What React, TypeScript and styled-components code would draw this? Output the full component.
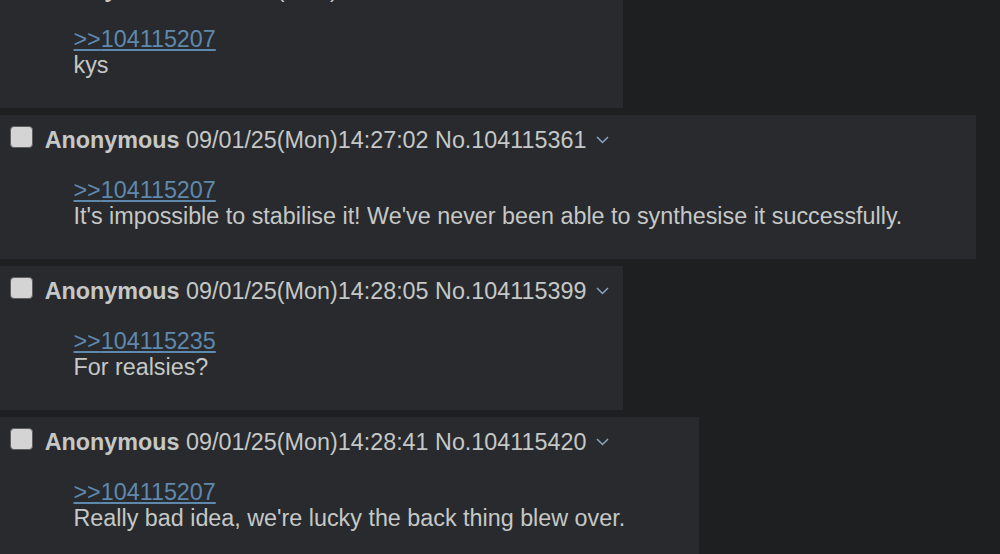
import React from "react";
import styled, { createGlobalStyle } from "styled-components";

const GlobalStyle = createGlobalStyle`
  html, body {
    margin: 0;
    padding: 0;
    background: #1d1f21;
    overflow: hidden;
  }
  body {
    font-family: "Liberation Sans", Arial, Helvetica, sans-serif;
    font-size: 23.33px;
    color: #c5c8c6;
  }
`;

const Thread = styled.div`
  display: flex;
  flex-direction: column;
  align-items: flex-start;
  gap: 7px;
  margin-top: -36.5px;
`;

const Reply = styled.div`
  background: #282a2e;
  padding: 3.5px;
  width: fit-content;
`;

const PostInfo = styled.div`
  white-space: nowrap;
  line-height: normal;
`;

const Check = styled.input.attrs({ type: "checkbox" })`
  appearance: none;
  -webkit-appearance: none;
  box-sizing: border-box;
  width: 22.75px;
  height: 22.5px;
  margin: 7.5px 5.5px 0 6.5px;
  vertical-align: baseline;
  background: #d4d4d4;
  border: 1.5px solid #5f5f5f;
  border-radius: 4px;
`;

const Name = styled.span`
  font-weight: bold;
  color: #c5c8c6;
`;

const DateTime = styled.span`
  color: #c5c8c6;
`;

const PostNum = styled.span`
  color: #c5c8c6;
`;

const MenuBtn = styled.span`
  display: inline-block;
  margin-left: 10px;
  margin-right: 10.5px;
  vertical-align: 4px;
  line-height: 0;
`;

const Message = styled.blockquote`
  margin: 23px 70px 26px 70px;
  line-height: 26px;
`;

const QuoteLink = styled.a`
  color: #5f89ac;
  text-decoration: underline;
  text-underline-offset: 2px;
`;

type Post = { time: string; no: string; quote: string; text: string };

const posts: Post[] = [
  { time: "14:26:48", no: "104115340", quote: "104115207", text: "kys" },
  {
    time: "14:27:02",
    no: "104115361",
    quote: "104115207",
    text: "It's impossible to stabilise it! We've never been able to synthesise it successfully.",
  },
  { time: "14:28:05", no: "104115399", quote: "104115235", text: "For realsies?" },
  {
    time: "14:28:41",
    no: "104115420",
    quote: "104115207",
    text: "Really bad idea, we're lucky the back thing blew over.",
  },
];

const Chevron = () => (
  <svg width="13" height="8" viewBox="0 0 13 8" fill="none">
    <polyline points="1,1 6.5,6.5 12,1" stroke="#87a6c4" strokeWidth="1.5" />
  </svg>
);

export default function App() {
  return (
    <>
      <GlobalStyle />
      <Thread>
        {posts.map((p) => (
          <Reply key={p.no}>
            <PostInfo>
              <Check />{" "}
              <Name>Anonymous</Name> <DateTime>09/01/25(Mon){p.time}</DateTime>{" "}
              <PostNum>No.{p.no}</PostNum>
              <MenuBtn>
                <Chevron />
              </MenuBtn>
            </PostInfo>
            <Message>
              <QuoteLink href="#">&gt;&gt;{p.quote}</QuoteLink>
              <br />
              {p.text}
            </Message>
          </Reply>
        ))}
      </Thread>
    </>
  );
}
